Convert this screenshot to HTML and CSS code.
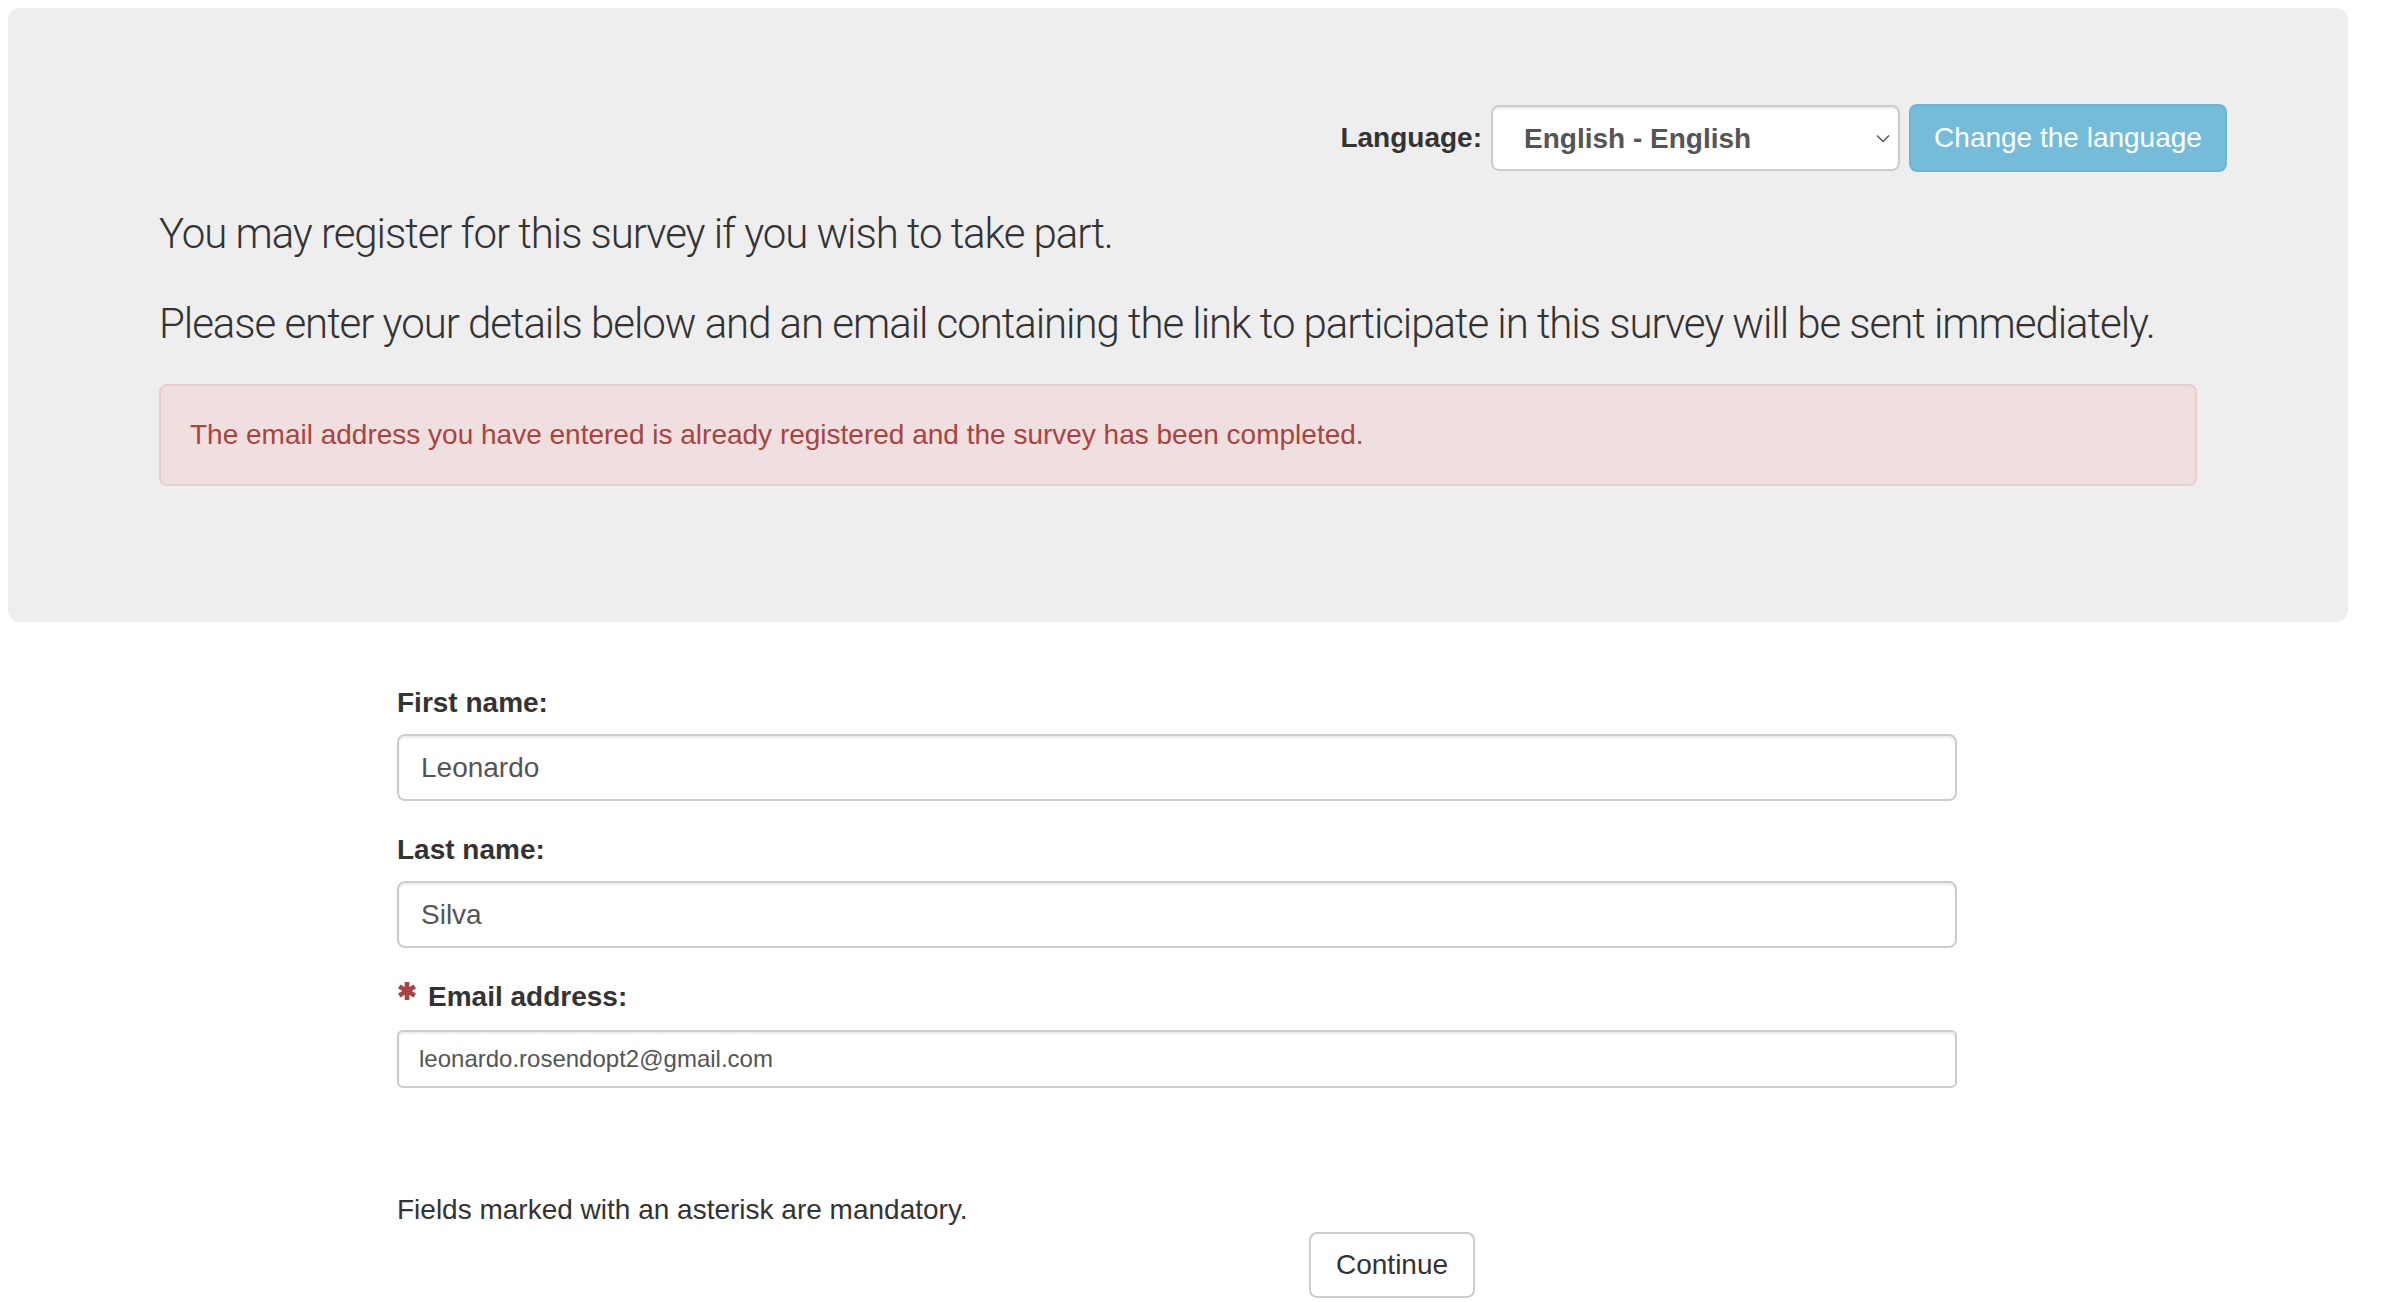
FILE: index.html
```html
<!DOCTYPE html>
<html lang="en">
<head>
<meta charset="utf-8">
<title>Survey registration</title>
<link rel="stylesheet" href="styles.css">
</head>
<body>
  <div class="jumbotron">
    <form class="lang-row">
      <label class="lang-label" for="lang">Language:</label>
      <div class="select-wrap">
        <select id="lang" class="lang-select">
          <option>English - English</option>
        </select>
        <svg class="chev" width="14" height="9" viewBox="0 0 14 9"><path d="M1 1.5 L7 7.5 L13 1.5" fill="none" stroke="#555" stroke-width="1.4"/></svg>
      </div>
      <button type="button" class="btn-info">Change the language</button>
    </form>
    <p class="lead">You may register for this survey if you wish to take part.</p>
    <p class="lead">Please enter your details below and an email containing the link to participate in this survey will be sent immediately.</p>
    <div class="alert">The email address you have entered is already registered and the survey has been completed.</div>
  </div>

  <form class="reg-form">
    <div class="form-group">
      <label class="field-label" for="fn">First name:</label>
      <input id="fn" class="form-control" type="text" value="Leonardo">
    </div>
    <div class="form-group">
      <label class="field-label" for="ln">Last name:</label>
      <input id="ln" class="form-control" type="text" value="Silva">
    </div>
    <div class="form-group email-group">
      <label class="field-label" for="em"><svg class="asterisk" width="20" height="20" viewBox="0 0 20 20"><g stroke="#a94442" stroke-width="4.6" stroke-linecap="butt"><line x1="10" y1="1" x2="10" y2="19"/><line x1="2.2" y1="5.5" x2="17.8" y2="14.5"/><line x1="2.2" y1="14.5" x2="17.8" y2="5.5"/></g></svg>Email address:</label>
      <input id="em" class="form-control input-sm" type="email" value="leonardo.rosendopt2@gmail.com">
    </div>
    <p class="mandatory">Fields marked with an asterisk are mandatory.</p>
    <div class="actions">
      <button type="button" class="btn-default">Continue</button>
    </div>
  </form>
</body>
</html>
```

FILE: styles.css
```css
html, body {
  background: #fff;
}
body {
  margin: 8px 8px 0;
  font-family: "Liberation Sans", Arial, sans-serif;
  font-size: 28px;
  line-height: 40px;
  color: #333;
}

.jumbotron {
  width: 2340px;
  box-sizing: border-box;
  background: #eee;
  border-radius: 12px;
  padding: 96px 151px 96px;
}

.lang-row {
  display: flex;
  justify-content: flex-end;
  align-items: center;
  gap: 9px;
  margin: 0 -30px 32px 0;
  height: 68px;
}
.lang-label {
  font-weight: bold;
  color: #333;
}
.select-wrap {
  position: relative;
  height: 66px;
}
.lang-select {
  appearance: none;
  -webkit-appearance: none;
  width: 409px;
  height: 66px;
  box-sizing: border-box;
  border: 2px solid #ccc;
  border-radius: 8px;
  background: #fff;
  font-family: "Liberation Sans", Arial, sans-serif;
  font-size: 28px;
  font-weight: bold;
  color: #555;
  padding: 0 0 0 31px;
  box-shadow: inset 0 2px 2px rgba(0,0,0,0.075);
}
.chev {
  position: absolute;
  right: 10px;
  top: 29px;
}
.btn-info {
  height: 68px;
  width: 318px;
  box-sizing: border-box;
  background: #75bcdb;
  border: 2px solid #6cb5d5;
  border-radius: 8px;
  color: #fff;
  font-family: "Liberation Sans", Arial, sans-serif;
  font-size: 28px;
  padding: 0;
}

.lead {
  margin: 0 0 30px;
  font-family: Roboto, "Liberation Sans", sans-serif;
  font-weight: 300;
  font-size: 42px;
  line-height: 60px;
  color: #333;
  letter-spacing: -1.05px;
  white-space: nowrap;
}

.alert {
  margin: 0 0 40px;
  padding: 29px 29px;
  border: 2px solid #ebccd1;
  border-radius: 8px;
  background: #f0dfdf;
  color: #a94442;
}

.reg-form {
  width: 1560px;
  margin: 61px 0 0 389px;
}
.form-group {
  display: flex;
  flex-direction: column;
  margin-bottom: 29px;
}
.field-label {
  font-weight: bold;
  margin-bottom: 11px;
  display: flex;
  align-items: center;
  gap: 11px;
}
.asterisk {
  margin-top: -12px;
}
.form-control {
  box-sizing: border-box;
  height: 67px;
  border: 2px solid #ccc;
  border-radius: 8px;
  padding: 0 22px;
  font-family: "Liberation Sans", Arial, sans-serif;
  font-size: 28px;
  color: #555;
  background: #fff;
  box-shadow: inset 0 2px 2px rgba(0,0,0,0.075);
}
.email-group .field-label {
  margin-bottom: 13px;
}
.input-sm {
  height: 58px;
  font-size: 24px;
  padding: 0 20px;
  border-radius: 6px;
}

.mandatory {
  margin: 102px 0 2px;
}
.actions {
  display: grid;
  grid-template-columns: repeat(12, 1fr);
}
.btn-default {
  grid-column: 8 / span 2;
  justify-self: start;
  margin-left: 2px;
  height: 66px;
  box-sizing: border-box;
  padding: 0 25px;
  background: #fff;
  border: 2px solid #ccc;
  border-radius: 8px;
  font-family: "Liberation Sans", Arial, sans-serif;
  font-size: 28px;
  color: #333;
}
```
